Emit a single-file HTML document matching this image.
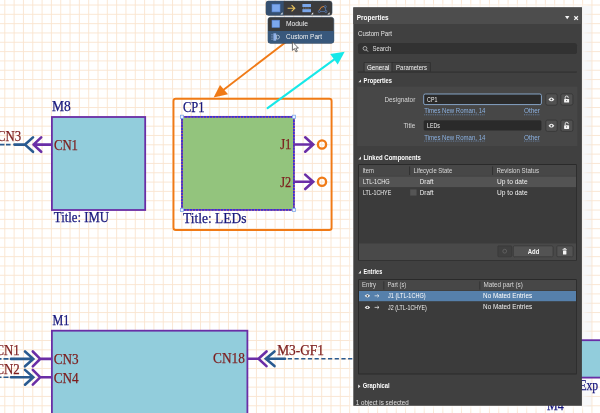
<!DOCTYPE html>
<html lang="en"><head><meta charset="utf-8"><title>Properties - Custom Part</title>
<style>
html,body{margin:0;padding:0;background:#fff;overflow:hidden}
svg{display:block}
</style></head><body>
<svg width="600" height="413" viewBox="0 0 600 413">
<defs>
<filter id="soft" x="-5%" y="-5%" width="110%" height="110%"><feGaussianBlur stdDeviation="0.35"/></filter>
<filter id="glow" x="-10%" y="-10%" width="120%" height="120%"><feGaussianBlur stdDeviation="1.6"/></filter>
</defs>
<rect width="600" height="413" fill="#ffffff"/>
<path d="M4.80 0V413M14.12 0V413M23.44 0V413M32.76 0V413M42.08 0V413M51.40 0V413M60.72 0V413M70.04 0V413M79.36 0V413M88.68 0V413M98.00 0V413M107.32 0V413M116.64 0V413M125.96 0V413M135.28 0V413M144.60 0V413M153.92 0V413M163.24 0V413M172.56 0V413M181.88 0V413M191.20 0V413M200.52 0V413M209.84 0V413M219.16 0V413M228.48 0V413M237.80 0V413M247.12 0V413M256.44 0V413M265.76 0V413M275.08 0V413M284.40 0V413M293.72 0V413M303.04 0V413M312.36 0V413M321.68 0V413M331.00 0V413M340.32 0V413M349.64 0V413M358.96 0V413M368.28 0V413M377.60 0V413M386.92 0V413M396.24 0V413M405.56 0V413M414.88 0V413M424.20 0V413M433.52 0V413M442.84 0V413M452.16 0V413M461.48 0V413M470.80 0V413M480.12 0V413M489.44 0V413M498.76 0V413M508.08 0V413M517.40 0V413M526.72 0V413M536.04 0V413M545.36 0V413M554.68 0V413M564.00 0V413M573.32 0V413M582.64 0V413M591.96 0V413M0 5.00H600M0 14.32H600M0 23.64H600M0 32.96H600M0 42.28H600M0 51.60H600M0 60.92H600M0 70.24H600M0 79.56H600M0 88.88H600M0 98.20H600M0 107.52H600M0 116.84H600M0 126.16H600M0 135.48H600M0 144.80H600M0 154.12H600M0 163.44H600M0 172.76H600M0 182.08H600M0 191.40H600M0 200.72H600M0 210.04H600M0 219.36H600M0 228.68H600M0 238.00H600M0 247.32H600M0 256.64H600M0 265.96H600M0 275.28H600M0 284.60H600M0 293.92H600M0 303.24H600M0 312.56H600M0 321.88H600M0 331.20H600M0 340.52H600M0 349.84H600M0 359.16H600M0 368.48H600M0 377.80H600M0 387.12H600M0 396.44H600M0 405.76H600" stroke="#f9e4cf" stroke-width="0.9" fill="none"/>
<rect x="350.4" y="5" width="236" height="404" fill="#fff" opacity="0.7" filter="url(#glow)"/>
<rect x="581" y="6" width="10.6" height="401" fill="#e4e8ee" opacity="0.3"/>
<g filter="url(#soft)">

<rect x="51.9" y="117" width="93.3" height="93.0" fill="#92cddc" stroke="#6a2da6" stroke-width="1.8"/>
<text x="52.1" y="111.2" font-family="Liberation Serif, serif" font-size="14.2" fill="#16167c" stroke="#16167c" stroke-width="0.25" textLength="18.8" lengthAdjust="spacingAndGlyphs">M8</text>
<text x="53.9" y="149.6" font-family="Liberation Serif, serif" font-size="14.2" fill="#7c1d1d" stroke="#7c1d1d" stroke-width="0.25" textLength="24.1" lengthAdjust="spacingAndGlyphs">CN1</text>
<text x="53.8" y="221.6" font-family="Liberation Serif, serif" font-size="14.2" fill="#16167c" stroke="#16167c" stroke-width="0.25" textLength="55.2" lengthAdjust="spacingAndGlyphs">Title: IMU</text>
<text x="-3.0" y="141.0" font-family="Liberation Serif, serif" font-size="14.2" fill="#7c1d1d" stroke="#7c1d1d" stroke-width="0.25" textLength="24.2" lengthAdjust="spacingAndGlyphs">CN3</text>
<g fill="none" stroke-width="2.6" stroke-linecap="round" stroke-linejoin="miter">
<path d="M51 144.6H33.6M41.2 137.4L33.5 144.6L41.2 151.79999999999998" stroke="#6a2da6" stroke-linejoin="round"/>
<path d="M33 137.4L25 144.6L33 151.79999999999998M25 144.6H14.4" stroke="#2a5a90"/>
<path d="M10.6 144.6H6M4.5 144.6H-2" stroke="#2a5a90" stroke-width="1.6" stroke-linecap="butt"/>
</g>
<rect x="173.5" y="98.8" width="158.1" height="131.2" rx="2.3" fill="none" stroke="#f07a16" stroke-width="1.9"/>
<rect x="182" y="116.8" width="111.9" height="93.1" fill="#93c47d" stroke="#a8506a" stroke-width="1.7"/>
<rect x="182" y="116.8" width="111.9" height="93.1" fill="none" stroke="#3a2edc" stroke-width="1.7" stroke-dasharray="2.3 0.8"/>
<rect x="180.4" y="115.2" width="3.2" height="3.2" fill="#e8f0ff" stroke="#7fa8e8" stroke-width="0.8"/>
<rect x="292.3" y="115.2" width="3.2" height="3.2" fill="#e8f0ff" stroke="#7fa8e8" stroke-width="0.8"/>
<rect x="180.4" y="208.3" width="3.2" height="3.2" fill="#e8f0ff" stroke="#7fa8e8" stroke-width="0.8"/>
<rect x="292.3" y="208.3" width="3.2" height="3.2" fill="#e8f0ff" stroke="#7fa8e8" stroke-width="0.8"/>
<text x="182.9" y="111.6" font-family="Liberation Serif, serif" font-size="14.2" fill="#16167c" stroke="#16167c" stroke-width="0.25" textLength="21.5" lengthAdjust="spacingAndGlyphs">CP1</text>
<text x="182.9" y="222.8" font-family="Liberation Serif, serif" font-size="14.2" fill="#16167c" stroke="#16167c" stroke-width="0.25" textLength="63.7" lengthAdjust="spacingAndGlyphs">Title: LEDs</text>
<text x="280.2" y="149.3" font-family="Liberation Serif, serif" font-size="14.2" fill="#7c1d1d" stroke="#7c1d1d" stroke-width="0.25" textLength="11.2" lengthAdjust="spacingAndGlyphs">J1</text>
<text x="280.2" y="186.5" font-family="Liberation Serif, serif" font-size="14.2" fill="#7c1d1d" stroke="#7c1d1d" stroke-width="0.25" textLength="11.0" lengthAdjust="spacingAndGlyphs">J2</text>
<path d="M294.8 144.5H312.6M305.2 137.3L313.2 144.5L305.2 151.7" fill="none" stroke="#6a2da6" stroke-width="2.6" stroke-linecap="round"/>
<circle cx="322" cy="144.5" r="4.1" fill="none" stroke="#f07a16" stroke-width="2.3"/>
<path d="M294.8 181.8H312.6M305.2 174.60000000000002L313.2 181.8L305.2 189.0" fill="none" stroke="#6a2da6" stroke-width="2.6" stroke-linecap="round"/>
<circle cx="322" cy="181.8" r="4.1" fill="none" stroke="#f07a16" stroke-width="2.3"/>
<rect x="51.9" y="330.7" width="195.5" height="100" fill="#92cddc" stroke="#6a2da6" stroke-width="1.8"/>
<text x="52.4" y="325.2" font-family="Liberation Serif, serif" font-size="14.2" fill="#16167c" stroke="#16167c" stroke-width="0.25" textLength="16.8" lengthAdjust="spacingAndGlyphs">M1</text>
<text x="53.8" y="364.0" font-family="Liberation Serif, serif" font-size="14.2" fill="#7c1d1d" stroke="#7c1d1d" stroke-width="0.25" textLength="24.9" lengthAdjust="spacingAndGlyphs">CN3</text>
<text x="53.8" y="382.5" font-family="Liberation Serif, serif" font-size="14.2" fill="#7c1d1d" stroke="#7c1d1d" stroke-width="0.25" textLength="24.9" lengthAdjust="spacingAndGlyphs">CN4</text>
<text x="213.0" y="363.2" font-family="Liberation Serif, serif" font-size="14.2" fill="#7c1d1d" stroke="#7c1d1d" stroke-width="0.25" textLength="31.8" lengthAdjust="spacingAndGlyphs">CN18</text>
<text x="-4.5" y="355.0" font-family="Liberation Serif, serif" font-size="14.2" fill="#7c1d1d" stroke="#7c1d1d" stroke-width="0.25" textLength="24.3" lengthAdjust="spacingAndGlyphs">CN1</text>
<text x="-4.5" y="373.7" font-family="Liberation Serif, serif" font-size="14.2" fill="#7c1d1d" stroke="#7c1d1d" stroke-width="0.25" textLength="24.3" lengthAdjust="spacingAndGlyphs">CN2</text>
<text x="277.2" y="354.8" font-family="Liberation Serif, serif" font-size="14.2" fill="#7c1d1d" stroke="#7c1d1d" stroke-width="0.25" textLength="46.8" lengthAdjust="spacingAndGlyphs">M3-GF1</text>
<g fill="none" stroke-width="2.6" stroke-linecap="round">
<path d="M51 358.9H40.2M32.8 351.5L40.2 358.9L32.8 366.29999999999995" stroke="#6a2da6"/>
<path d="M25 351.5L33.3 358.9L25 366.29999999999995M33 358.9H11" stroke="#2a5a90"/>
<path d="M8.5 358.9H3.5M1.5 358.9H-3" stroke="#2a5a90" stroke-width="1.6" stroke-linecap="butt"/>
</g>
<g fill="none" stroke-width="2.6" stroke-linecap="round">
<path d="M51 377.3H40.2M32.8 369.90000000000003L40.2 377.3L32.8 384.7" stroke="#6a2da6"/>
<path d="M25 369.90000000000003L33.3 377.3L25 384.7M33 377.3H11" stroke="#2a5a90"/>
<path d="M8.5 377.3H3.5M1.5 377.3H-3" stroke="#2a5a90" stroke-width="1.6" stroke-linecap="butt"/>
</g>
<g fill="none" stroke-width="2.6" stroke-linecap="round">
<path d="M248.3 358.8H258.5M266.5 351.5L258.5 358.8L266.5 366.1" stroke="#6a2da6"/>
<path d="M274.5 351.5L265.8 358.8L274.5 366.1M266.2 358.8H285" stroke="#2a5a90"/>
<path d="M287.8 358.8H360" stroke="#2a5a90" stroke-width="1.6" stroke-linecap="butt" stroke-dasharray="4.2 2.5"/>
</g>
<rect x="575" y="340.2" width="40" height="37.4" fill="#92cddc" stroke="#6a2da6" stroke-width="1.8"/>
<text x="579.4" y="390.2" font-family="Liberation Serif, serif" font-size="14.2" fill="#16167c" stroke="#16167c" stroke-width="0.25" textLength="18.8" lengthAdjust="spacingAndGlyphs">Exp</text>
<text x="547.0" y="409.5" font-family="Liberation Serif, serif" font-size="14.2" fill="#16167c" stroke="#16167c" stroke-width="0.25" textLength="16.8" lengthAdjust="spacingAndGlyphs">M4</text>
<path d="M286.6 41.5L222 91" stroke="#f07a16" stroke-width="1.9" fill="none"/>
<path d="M213.6 97.4L220 85L228 94.3Z" fill="#f07a16"/>
<path d="M267.6 108.2L335 58.8" stroke="#18e8e8" stroke-width="2.1" fill="none" stroke-linecap="round"/>
<path d="M344.7 51.7L330.2 54.1L337.7 64.4Z" fill="#18e8e8"/>
</g>
<g filter="url(#soft)">
<rect x="266" y="1.1" width="66" height="14.2" rx="2.5" fill="#3b3b3c" stroke="#33465c" stroke-width="0.6"/>
<path d="M268.5 1.1H283.7V15.3H268.5a2.5 2.5 0 0 1-2.5-2.5V3.6a2.5 2.5 0 0 1 2.5-2.5Z" fill="#35506f"/>
<rect x="272" y="4.2" width="8" height="7.7" fill="#7ba7ec" stroke="#5a86d8" stroke-width="0.6"/>
<path d="M287.6 8.3H294.6M291.6 5.2L294.8 8.3L291.6 11.4" fill="none" stroke="#e9c35e" stroke-width="1.1"/>
<rect x="302.4" y="4" width="8.6" height="3" fill="#7aa6ea"/><rect x="302.4" y="9.2" width="8.6" height="3" fill="#7aa6ea"/><path d="M303 8.1H310.4" stroke="#9a9a9a" stroke-width="0.7" stroke-dasharray="1.4 0.8"/>
<path d="M319.4 10.2A5.2 5.2 0 0 1 324.2 6.3" fill="none" stroke="#d98338" stroke-width="1"/><path d="M319.4 11.5H325.8L325.2 6.8" fill="none" stroke="#5f8acb" stroke-width="0.6"/>
<circle cx="319.3" cy="11.5" r="1.05" fill="#3b3b3c" stroke="#5f8acb" stroke-width="0.6"/>
<circle cx="325.9" cy="11.5" r="1.05" fill="#3b3b3c" stroke="#5f8acb" stroke-width="0.6"/>
<circle cx="325.3" cy="6.7" r="1.05" fill="#3b3b3c" stroke="#5f8acb" stroke-width="0.6"/>
<path d="M282.6 12.2V14.4H280.40000000000003Z" fill="#e8e8e8"/>
<path d="M313.2 12.2V14.4H311.0Z" fill="#e8e8e8"/>
<path d="M329.6 12.2V14.4H327.40000000000003Z" fill="#e8e8e8"/>
<rect x="268" y="17.3" width="65.8" height="26" rx="2.5" fill="#3a3a3b" stroke="#33465c" stroke-width="0.6"/>
<path d="M268 31H333.8V40.8a2.5 2.5 0 0 1-2.5 2.5H270.5a2.5 2.5 0 0 1-2.5-2.5Z" fill="#37587c"/>
<rect x="272" y="20.2" width="7.6" height="7.2" fill="#7ba7ec" stroke="#5a86d8" stroke-width="0.6"/>
<rect x="273.4" y="33.3" width="2.8" height="7.4" fill="#8fb0e6"/><path d="M271 34.6H273.4M271 36.2H273.4M271 37.8H273.4M271 39.4H273.4" stroke="#7f99c2" stroke-width="0.6"/><path d="M276.4 35.2H277.6a1.9 1.9 0 0 1 0 3.8H276.4Z" fill="none" stroke="#dfe8f6" stroke-width="0.6"/>
<text x="286.0" y="26.0" font-family="Liberation Sans, sans-serif" font-size="6.8" fill="#f0f0f0" textLength="22.0" lengthAdjust="spacingAndGlyphs">Module</text>
<text x="286.0" y="38.7" font-family="Liberation Sans, sans-serif" font-size="6.8" fill="#f0f0f0" textLength="36.0" lengthAdjust="spacingAndGlyphs">Custom Part</text>
</g>
<path d="M292.4 41.8V50.4L294.4 48.6L295.9 51.9L297.3 51.3L295.8 48.1H298.4Z" fill="#fff" stroke="#333" stroke-width="0.7" stroke-linejoin="round"/>
<g filter="url(#soft)">
<rect x="353.3" y="7.4" width="228.6" height="398.4" fill="#3f3f3f"/>
<rect x="353.3" y="7.4" width="228.6" height="16.6" fill="#4e4e4e"/>
<text x="356.8" y="19.9" font-family="Liberation Sans, sans-serif" font-size="6.8" font-weight="bold" fill="#ffffff" textLength="31.8" lengthAdjust="spacingAndGlyphs">Properties</text>
<path d="M565 16.1H569.4L567.2 19.2Z" fill="#f4f4f4"/>
<path d="M574.3 16.3L577.9 19.9M577.9 16.3L574.3 19.9" stroke="#f4f4f4" stroke-width="1.3" fill="none"/>
<text x="358.1" y="35.5" font-family="Liberation Sans, sans-serif" font-size="6.6" fill="#e6e6e6" textLength="33.9" lengthAdjust="spacingAndGlyphs">Custom Part</text>
<rect x="358.1" y="43.3" width="218.8" height="10.6" rx="2" fill="#303030"/>
<circle cx="365" cy="48.4" r="1.9" fill="none" stroke="#d4d4d4" stroke-width="0.7"/><path d="M366.4 49.9L368 51.6" stroke="#d4d4d4" stroke-width="0.9"/>
<text x="372.5" y="51.1" font-family="Liberation Sans, sans-serif" font-size="6.6" fill="#e0e0e0" textLength="18.7" lengthAdjust="spacingAndGlyphs">Search</text>
<rect x="363.7" y="61.9" width="67" height="10.2" rx="1" fill="#2c2c2c"/>
<rect x="364.5" y="62.7" width="27" height="9.2" fill="#505050"/>
<rect x="392.3" y="62.7" width="37.6" height="9.2" fill="#3f3f3f"/>
<path d="M357.9 72.1H576.8" stroke="#2c2c2c" stroke-width="0.9"/>
<text x="367.0" y="69.9" font-family="Liberation Sans, sans-serif" font-size="6.6" fill="#ffffff" textLength="22.3" lengthAdjust="spacingAndGlyphs">General</text>
<text x="396.1" y="69.9" font-family="Liberation Sans, sans-serif" font-size="6.6" fill="#f0f0f0" textLength="31.0" lengthAdjust="spacingAndGlyphs">Parameters</text>
<path d="M361 79.4V82.2H358.4Z" fill="#e8e8e8"/>
<text x="363.6" y="83.0" font-family="Liberation Sans, sans-serif" font-size="6.6" font-weight="bold" fill="#ffffff" textLength="28.4" lengthAdjust="spacingAndGlyphs">Properties</text>
<rect x="357.1" y="86.3" width="220.4" height="59.9" fill="#464646"/>
<text x="384.4" y="102.2" font-family="Liberation Sans, sans-serif" font-size="6.6" fill="#d6d6d6" textLength="30.9" lengthAdjust="spacingAndGlyphs">Designator</text>
<rect x="423.7" y="94" width="117.7" height="10.6" rx="1.5" fill="#2a2a2a" stroke="#8fb0d6" stroke-width="0.9"/>
<text x="427.1" y="101.9" font-family="Liberation Sans, sans-serif" font-size="6.6" fill="#f2f2f2" textLength="10.2" lengthAdjust="spacingAndGlyphs">CP1</text>
<rect x="423.7" y="120.2" width="117.7" height="10.4" rx="1.5" fill="#2a2a2a"/>
<text x="403.4" y="127.6" font-family="Liberation Sans, sans-serif" font-size="6.6" fill="#d6d6d6" textLength="11.9" lengthAdjust="spacingAndGlyphs">Title</text>
<text x="427.1" y="127.6" font-family="Liberation Sans, sans-serif" font-size="6.6" fill="#f2f2f2" textLength="12.7" lengthAdjust="spacingAndGlyphs">LEDs</text>
<text x="424.2" y="113.2" font-family="Liberation Sans, sans-serif" font-size="6.6" fill="#8cb2e2" textLength="61.2" lengthAdjust="spacingAndGlyphs">Times New Roman, 14</text>
<text x="524.0" y="113.2" font-family="Liberation Sans, sans-serif" font-size="6.6" fill="#8cb2e2" textLength="16.0" lengthAdjust="spacingAndGlyphs">Other</text>
<path d="M424.2 114.8H485.4M524 114.8H540" stroke="#7fa6d8" stroke-width="0.6" stroke-dasharray="1 0.8"/>
<text x="424.2" y="139.5" font-family="Liberation Sans, sans-serif" font-size="6.6" fill="#8cb2e2" textLength="61.2" lengthAdjust="spacingAndGlyphs">Times New Roman, 14</text>
<text x="524.0" y="139.5" font-family="Liberation Sans, sans-serif" font-size="6.6" fill="#8cb2e2" textLength="16.0" lengthAdjust="spacingAndGlyphs">Other</text>
<path d="M424.2 141.1H485.4M524 141.1H540" stroke="#7fa6d8" stroke-width="0.6" stroke-dasharray="1 0.8"/>
<rect x="545.8" y="93.8" width="11.4" height="11.3" rx="1.8" fill="#515151" stroke="#323232" stroke-width="0.7"/>
<rect x="560.8" y="93.8" width="12.1" height="11.3" rx="1.8" fill="#515151" stroke="#323232" stroke-width="0.7"/>
<path d="M548.5 99.39999999999999Q551.4 95.69999999999999 554.3 99.39999999999999Q551.4 103.1 548.5 99.39999999999999Z" fill="#f6f6f6"/><circle cx="551.4" cy="99.39999999999999" r="0.95" fill="#4a4a4a"/>
<rect x="564.1" y="98.90" width="5" height="3.7" rx="0.6" fill="#f6f6f6"/><path d="M565.2 98.90V97.50a1.5 1.5 0 0 1 3 0V97.90" fill="none" stroke="#f6f6f6" stroke-width="0.9"/><circle cx="566.6" cy="100.60" r="0.55" fill="#555"/>
<rect x="545.8" y="120.1" width="11.4" height="11.3" rx="1.8" fill="#515151" stroke="#323232" stroke-width="0.7"/>
<rect x="560.8" y="120.1" width="12.1" height="11.3" rx="1.8" fill="#515151" stroke="#323232" stroke-width="0.7"/>
<path d="M548.5 125.69999999999999Q551.4 121.99999999999999 554.3 125.69999999999999Q551.4 129.39999999999998 548.5 125.69999999999999Z" fill="#f6f6f6"/><circle cx="551.4" cy="125.69999999999999" r="0.95" fill="#4a4a4a"/>
<rect x="564.1" y="125.20" width="5" height="3.7" rx="0.6" fill="#f6f6f6"/><path d="M565.2 125.20V123.80a1.5 1.5 0 0 1 3 0V124.20" fill="none" stroke="#f6f6f6" stroke-width="0.9"/><circle cx="566.6" cy="126.90" r="0.55" fill="#555"/>
<path d="M361 156.6V159.4H358.4Z" fill="#e8e8e8"/>
<text x="363.4" y="160.2" font-family="Liberation Sans, sans-serif" font-size="6.6" font-weight="bold" fill="#ffffff" textLength="57.5" lengthAdjust="spacingAndGlyphs">Linked Components</text>
<rect x="358.6" y="164.6" width="217.8" height="95.6" fill="#3b3b3b" stroke="#2a2a2a" stroke-width="0.8"/>
<rect x="359" y="165" width="217" height="10.9" fill="#474747"/>
<rect x="359" y="176.5" width="217" height="10.6" fill="#525252"/>
<rect x="359" y="243.4" width="217" height="16.6" fill="#484848"/>
<path d="M409.6 166.4V175M492.6 166.4V175" stroke="#2c2c2c" stroke-width="0.8"/>
<text x="362.4" y="172.8" font-family="Liberation Sans, sans-serif" font-size="6.6" fill="#d8d8d8" textLength="11.4" lengthAdjust="spacingAndGlyphs">Item</text>
<text x="413.5" y="172.8" font-family="Liberation Sans, sans-serif" font-size="6.6" fill="#d8d8d8" textLength="38.8" lengthAdjust="spacingAndGlyphs">Lifecycle State</text>
<text x="496.4" y="172.6" font-family="Liberation Sans, sans-serif" font-size="6.6" fill="#d8d8d8" textLength="42.6" lengthAdjust="spacingAndGlyphs">Revision Status</text>
<text x="363.0" y="184.1" font-family="Liberation Sans, sans-serif" font-size="6.6" fill="#f0f0f0" textLength="26.7" lengthAdjust="spacingAndGlyphs">LTL-1CHG</text>
<text x="419.8" y="184.1" font-family="Liberation Sans, sans-serif" font-size="6.6" fill="#f0f0f0" textLength="13.6" lengthAdjust="spacingAndGlyphs">Draft</text>
<text x="497.0" y="183.8" font-family="Liberation Sans, sans-serif" font-size="6.6" fill="#f0f0f0" textLength="30.6" lengthAdjust="spacingAndGlyphs">Up to date</text>
<text x="363.0" y="194.9" font-family="Liberation Sans, sans-serif" font-size="6.6" fill="#f0f0f0" textLength="28.2" lengthAdjust="spacingAndGlyphs">LTL-1CHYE</text>
<rect x="410.2" y="189.4" width="6.4" height="6.2" fill="#555555"/>
<text x="419.8" y="194.9" font-family="Liberation Sans, sans-serif" font-size="6.6" fill="#f0f0f0" textLength="13.6" lengthAdjust="spacingAndGlyphs">Draft</text>
<text x="497.0" y="194.6" font-family="Liberation Sans, sans-serif" font-size="6.6" fill="#f0f0f0" textLength="30.6" lengthAdjust="spacingAndGlyphs">Up to date</text>
<rect x="497.8" y="245.8" width="13.9" height="11" rx="1.2" fill="#404040" stroke="#363636" stroke-width="0.6"/>
<circle cx="504.7" cy="251.2" r="1.9" fill="none" stroke="#6c6c6c" stroke-width="0.7"/>
<rect x="513.3" y="245.8" width="39.7" height="11" rx="1.2" fill="#525252" stroke="#343434" stroke-width="0.6"/>
<text x="527.7" y="253.6" font-family="Liberation Sans, sans-serif" font-size="6.6" font-weight="bold" fill="#f4f4f4" textLength="11.6" lengthAdjust="spacingAndGlyphs">Add</text>
<rect x="556.8" y="245.8" width="16.2" height="11" rx="1.2" fill="#525252" stroke="#343434" stroke-width="0.6"/>
<path d="M562.5 249.7H566.9M563.9 249.3V248.5H565.5V249.3" stroke="#f6f6f6" stroke-width="0.8" fill="none"/><rect x="563" y="250.5" width="3.4" height="4.1" rx="0.5" fill="#f6f6f6"/>
<path d="M361 270.6V273.4H358.4Z" fill="#e8e8e8"/>
<text x="363.5" y="274.2" font-family="Liberation Sans, sans-serif" font-size="6.6" font-weight="bold" fill="#ffffff" textLength="18.7" lengthAdjust="spacingAndGlyphs">Entries</text>
<rect x="358.6" y="279.6" width="217.8" height="94.4" fill="#3b3b3b" stroke="#2a2a2a" stroke-width="0.8"/>
<rect x="359" y="280" width="217" height="10.6" fill="#474747"/>
<rect x="359" y="291" width="217" height="10.2" fill="#5780ab"/>
<path d="M383.8 281.4V289.6M479.8 281.4V289.6" stroke="#2c2c2c" stroke-width="0.8"/>
<text x="362.0" y="287.0" font-family="Liberation Sans, sans-serif" font-size="6.6" fill="#d8d8d8" textLength="14.1" lengthAdjust="spacingAndGlyphs">Entry</text>
<text x="387.5" y="287.0" font-family="Liberation Sans, sans-serif" font-size="6.6" fill="#d8d8d8" textLength="18.7" lengthAdjust="spacingAndGlyphs">Part (s)</text>
<text x="483.5" y="287.0" font-family="Liberation Sans, sans-serif" font-size="6.6" fill="#d8d8d8" textLength="39.4" lengthAdjust="spacingAndGlyphs">Mated part (s)</text>
<text x="388.1" y="298.1" font-family="Liberation Sans, sans-serif" font-size="6.6" fill="#ffffff" textLength="37.5" lengthAdjust="spacingAndGlyphs">J1 (LTL-1CHG)</text>
<text x="483.1" y="297.8" font-family="Liberation Sans, sans-serif" font-size="6.6" fill="#ffffff" textLength="49.0" lengthAdjust="spacingAndGlyphs">No Mated Entries</text>
<text x="388.1" y="309.6" font-family="Liberation Sans, sans-serif" font-size="6.6" fill="#f0f0f0" textLength="38.8" lengthAdjust="spacingAndGlyphs">J2 (LTL-1CHYE)</text>
<text x="483.1" y="309.3" font-family="Liberation Sans, sans-serif" font-size="6.6" fill="#f0f0f0" textLength="49.0" lengthAdjust="spacingAndGlyphs">No Mated Entries</text>
<path d="M364.7 295.8Q367.4 292.6 370.1 295.8Q367.4 299.0 364.7 295.8Z" fill="#f6f6f6"/><circle cx="367.4" cy="295.8" r="0.85" fill="#444"/>
<path d="M374.6 295.8H379M377.4 294.40000000000003L379 295.8L377.4 297.2" fill="none" stroke="#f0f0f0" stroke-width="0.7"/>
<path d="M364.7 307.4Q367.4 304.2 370.1 307.4Q367.4 310.59999999999997 364.7 307.4Z" fill="#f6f6f6"/><circle cx="367.4" cy="307.4" r="0.85" fill="#444"/>
<path d="M374.6 307.4H379M377.4 306.0L379 307.4L377.4 308.79999999999995" fill="none" stroke="#f0f0f0" stroke-width="0.7"/>
<path d="M358.2 384.4L360.4 386.3L358.2 388.2Z" fill="#e8e8e8"/>
<text x="362.8" y="388.3" font-family="Liberation Sans, sans-serif" font-size="6.6" font-weight="bold" fill="#ffffff" textLength="26.9" lengthAdjust="spacingAndGlyphs">Graphical</text>
<text x="355.8" y="405.0" font-family="Liberation Sans, sans-serif" font-size="6.6" fill="#e0e0e0" textLength="52.9" lengthAdjust="spacingAndGlyphs">1 object is selected</text>
</g>
</svg>
</body></html>
